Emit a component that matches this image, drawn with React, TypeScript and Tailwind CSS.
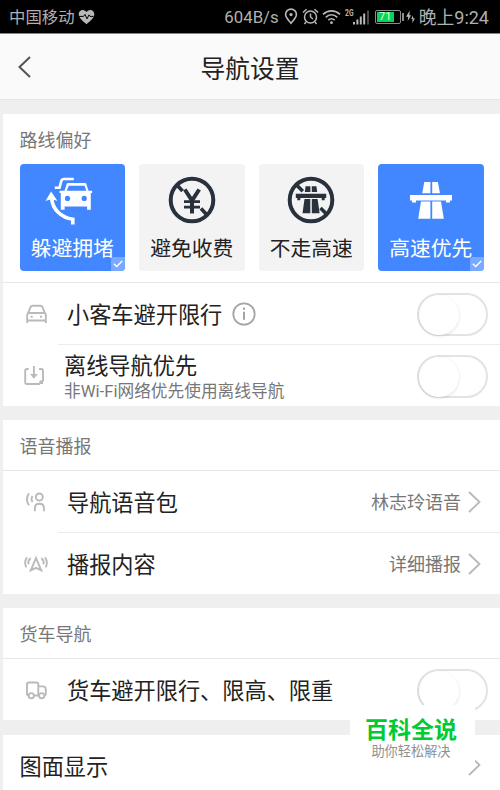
import type { ReactNode } from 'react'

function StatusBar() {
  return (
    <div className="flex h-[34px] items-center border-b border-[#858585] bg-black pr-[11px] pl-[9px] text-[#b0b0b0]">
      <span className="pt-[3px] text-[16.4px] leading-none whitespace-nowrap">中国移动</span>
      <svg className="ml-[3px]" width="17" height="16" viewBox="0 0 17 16">
        <path d="M8.5 15.2C5 12.200.7 8.900.7 5.200.7 2.600 2.500.9 4.700.9c1.600 0 2.900.8 3.800 2.200C9.400 1.700 10.700.9 12.300.9c2.200 0 4 1.700 4 4.300 0 3.700-4.300 7-7.800 10z" fill="#b8b8b8" />
        <path d="M1 7.400h4.500l1.500-2 2 4.500 2-4 1 1.500h3.500" fill="none" stroke="#000" strokeWidth="1" />
      </svg>
      <span className="ml-auto pt-[2px] font-[Roboto] text-[16.800px] leading-none">604B/s</span>
      <svg className="ml-[5px]" width="14" height="17" viewBox="0 0 14 17" fill="none" stroke="#b8b8b8" strokeWidth="1.600">
        <path d="M7 15.300C4.500 12 1.600 9.600 1.600 6.500a5.400 5.400 0 0 1 10.800 0C12.400 9.600 9.500 12 7 15.300z" />
        <circle cx="7" cy="6.600" r="1.600" fill="#b8b8b8" stroke="none" />
      </svg>
      <svg className="ml-[4px]" width="17" height="17" viewBox="0 0 17 17" fill="none" stroke="#b8b8b8" strokeWidth="1.500">
        <circle cx="8.500" cy="9" r="6" />
        <path d="M1 4.500 4.500 1.200M16 4.500 12.500 1.200M8.500 5.500V9l2.500 2M4 14l-1.500 2M13 14l1.500 2" />
      </svg>
      <svg className="ml-[3px]" width="19" height="16" viewBox="0 0 19 16" fill="none" stroke="#b8b8b8" strokeWidth="1.600">
        <path d="M1 5.300c5-4.600 12-4.600 17 0M3.700 8.300c3.500-3.200 8.100-3.200 11.600 0M6.300 11.100c2-1.700 4.400-1.700 6.400 0" />
        <circle cx="9.500" cy="13.700" r="1.400" fill="#b8b8b8" stroke="none" />
      </svg>
      <svg className="ml-[3px]" width="26" height="18" viewBox="0 0 26 18" fill="#b8b8b8">
        <text x="1" y="7.500" fontSize="8.500" fontWeight="700" fontFamily="Roboto" textLength="8.500" lengthAdjust="spacingAndGlyphs">2G</text>
        <path d="M9 14h2v2.500H9zM12.400 11.500h2v5h-2zM15.800 8.500h2v8h-2zM19.200 5.500h2v11h-2z" />
        <path d="M23 2.500h2v14h-2z" fill="#4a4a4a" />
      </svg>
      <div className="ml-[5px] flex h-[14px] w-[26px] rounded-[2px] border border-[#8c8c8c] p-px">
        <div className="flex w-[17px] items-center justify-center bg-[#0bd455] font-[Roboto] text-[11px] leading-none text-[#dfffe9]">71</div>
      </div>
      <div className="ml-px h-2 w-[2px] bg-[#8c8c8c]" />
      <svg className="ml-[2px]" width="9" height="14" viewBox="0 0 9 14" fill="#b8b8b8">
        <path d="M3.800.5 0 6.800h2.200L1.700 11l3.500-5.800H3.300zM6.800 5.500 5.200 9h1.400l-.4 4L9 8.500H7.400z" />
      </svg>
      <span className="ml-[4px] pt-[3px] text-[17.800px] leading-none whitespace-nowrap">
        晚上<span className="font-[Roboto] text-[18px]">9:24</span>
      </span>
    </div>
  )
}

function Tile({ label, active, children }: { label: string; active?: boolean; children: ReactNode }) {
  return (
    <div
      className={`relative flex h-[107px] flex-1 flex-col items-center overflow-hidden rounded-[4px] pt-[11px] ${
        active ? 'bg-[#4287ff] text-white' : 'bg-[#f3f3f3] text-[#222]'
      }`}
    >
      <svg className="overflow-visible" width="50" height="50" viewBox="0 0 50 50">
        {children}
      </svg>
      <span className="mt-[14px] text-[20.8px] leading-[21px] whitespace-nowrap">{label}</span>
      {active && (
        <span className="absolute right-0 bottom-0 flex h-[14px] w-[14px] items-center justify-center rounded-tl-[3px] bg-[#7aaaff]">
          <svg width="10" height="8" viewBox="0 0 10 8" fill="none" stroke="#fff" strokeWidth="1.300">
            <path d="M.8 3.800 3.700 6.500 9.200 1" />
          </svg>
        </span>
      )}
    </div>
  )
}

function Toggle() {
  return (
    <div className="mt-px ml-auto h-[43px] w-[71px] shrink-0 rounded-full border-2 border-[#e3e3e3] bg-white">
      <div className="h-[40px] w-[40px] rounded-full bg-white shadow-[0_1px_3px_rgba(0,0,0,0.13)]" />
    </div>
  )
}

function Chevron() {
  return (
    <svg className="ml-[7px] shrink-0" width="13" height="22" viewBox="0 0 13 22" fill="none" stroke="#b8b8b8" strokeWidth="1.800">
      <path d="M1 1l10.500 10L1 21" />
    </svg>
  )
}

function RowIcon({ children }: { children: ReactNode }) {
  return (
    <svg className="ml-[21px] shrink-0" width="24" height="24" viewBox="0 0 24 24" fill="none" stroke="#bababa" strokeWidth="1.900">
      {children}
    </svg>
  )
}

function Row({ icon, children, divider }: { icon: ReactNode; children: ReactNode; divider?: boolean }) {
  return (
    <div className="flex h-[62px] items-center">
      <RowIcon>{icon}</RowIcon>
      <div
        className={`ml-[10px] flex h-full flex-1 items-center border-b pr-[12px] pl-[9px] ${
          divider ? 'border-[#ececec]' : 'border-transparent'
        }`}
      >
        {children}
      </div>
    </div>
  )
}

function SectionTitle({ children }: { children: string }) {
  return (
    <div className="flex h-[51px] items-center border-b border-[#e8e8e8] pt-[3px] pl-[16.500px] text-[18px] leading-none text-[#777]">
      {children}
    </div>
  )
}

const title = 'pt-[4px] text-[22.2px] leading-none whitespace-nowrap text-[#222]'
const value = 'ml-auto pt-[3px] text-[18px] leading-none whitespace-nowrap text-[#777]'

export default function App() {
  return (
    <div className="relative h-[790px] w-[500px] overflow-hidden bg-[#efefef] font-['Roboto','Noto_Sans_CJK_SC',sans-serif]">
      <StatusBar />
      <header className="relative flex h-[66px] items-center justify-center border-b border-[#e5e5e5] bg-[#fafafa]">
        <svg className="absolute top-[22px] left-[18px]" width="13" height="22" viewBox="0 0 13 22" fill="none" stroke="#555" strokeWidth="2">
          <path d="M12 1 1.500 11 12 21" />
        </svg>
        <h1 className="pt-[7px] text-[24.8px] leading-none text-[#222]">导航设置</h1>
      </header>

      <main className="flex flex-col gap-[14px] pt-[14px] pl-[3px]">
        <section className="h-[292px] bg-white">
          <div className="h-[169px] border-b border-[#e8e8e8] px-[16.500px]">
            <div className="flex h-[50px] items-center pt-[3px] text-[18px] leading-none text-[#777]">路线偏好</div>
            <div className="flex gap-[14px]">
              <Tile label="躲避拥堵" active>
                <path fill="#fff" fillRule="evenodd" d="M21.500 8h16c1 0 1.700.5 2 1.400l2 6.300h3.600V18h-1.300v16.700h-3.700v-3.300H17.600v3.300h-3.800V18h-1.300v-2.300h5l2-6.300c.3-.9 1-1.400 2-1.400zm.4 2.700-2.300 5h19.700l-1.700-5zM20.500 20.800a2.600 2.600 0 1 0 0 5.200 2.600 2.600 0 0 0 0-5.200zm16.700 0a2.600 2.600 0 1 0 0 5.200 2.600 2.600 0 0 0 0-5.200z" />
                <path fill="none" stroke="#fff" strokeWidth="2.600" d="M26.800 4H17q-2 0-2.700 2l-1.800 6.700H7.800" />
                <path fill="#fff" d="M4.100 16.400l6.400 9.500c-4-1.500-8-1.500-12 0z" />
                <path fill="none" stroke="#fff" strokeWidth="3.600" d="M4.800 24C5.500 34 14 42.800 25.800 44.300v5.200" />
              </Tile>
              <Tile label="避免收费">
                <g fill="none" stroke="#29313d">
                  <circle cx="25" cy="25" r="21.300" strokeWidth="4" />
                  <path strokeWidth="3.600" d="M10 10l5.500 6M34 33.500l6 6.500" />
                  <path strokeWidth="4" d="M17.800 14.500 25 25.500l7.200-11M25 24.500v14" />
                  <path strokeWidth="2.800" d="M17 26.700h16M17 32.200h16" />
                </g>
              </Tile>
              <Tile label="不走高速">
                <g fill="none" stroke="#29313d">
                  <circle cx="25" cy="25" r="21.300" strokeWidth="4" />
                  <path strokeWidth="3.600" d="M9.500 9l7.300 7.300M34.500 33l6 6" />
                </g>
                <path fill="#29313d" d="M19.600 11.300h4.800V17h-5.600zM25.800 11.300h4.600l.8 5.700h-5.400zM9.800 18.700h30.400v4.200h-1.500v2.400h-3v-2.400H14.300v2.400h-3v-2.400H9.800zM18.500 24h5.800v14.300h-7.800zM25.800 24h5.800l2 14.300h-7.800z" />
              </Tile>
              <Tile label="高速优先" active>
                <path fill="#fff" d="M18.300 7h6.100v11.300h-8.200zM26.200 7h5.700l2.100 11.300h-7.800zM4 20h42v5.400h-2v2.200h-4v-2.200H10v2.200H6v-2.200H4zM15 26.500h9.400v17.200H12.200zM26.200 26.500H35l2.800 17.200H26.200z" />
              </Tile>
            </div>
          </div>
          <Row
            divider
            icon={
              <>
                <path d="M3.200 21V12.500l1-1.700L6.600 5q.6-1.300 2-1.300h7.800q1.400 0 2 1.300l2.400 5.800 1 1.700V21M3.200 18.500h18.600M4.200 11h16.600" />
                <path d="M6.700 14.800h2M16 14.800h2" />
              </>
            }
          >
            <span className={title}>小客车避开限行</span>
            <svg className="ml-[10px]" width="24" height="24" viewBox="0 0 24 24" fill="none" stroke="#a5a5a5" strokeWidth="1.800">
              <circle cx="12" cy="12" r="10.700" />
              <path d="M12 9.800v8M12 5.500v2.300" strokeWidth="2" />
            </svg>
            <Toggle />
          </Row>
          <Row
            icon={
              <>
                <path d="M4.700 5H3Q1.200 5 1.200 6.800v11.400Q1.200 20 3 20h12.200l3.800-3.500V6.800Q19 5 17.200 5H15M9.900 2v9" />
                <path d="M6 10h7.800L9.900 14.800z" fill="#bababa" stroke="none" />
                <path d="M15.500 20v-3.500H19V20z" fill="#bababa" stroke="none" />
              </>
            }
          >
            <div className="-ml-[3px] flex flex-col gap-[7px]">
              <span className={title}>离线导航优先</span>
              <span className="text-[16.700px] leading-none whitespace-nowrap text-[#777]">非Wi-Fi网络优先使用离线导航</span>
            </div>
            <Toggle />
          </Row>
        </section>

        <section className="h-[174px] bg-white">
          <SectionTitle>语音播报</SectionTitle>
          <Row
            divider
            icon={
              <>
                <circle cx="15.300" cy="7" r="3.500" />
                <path d="M10.900 21.300V18q0-4.300 4.500-4.300t4.500 4.300v3.300M5 3.300q-4.200 6 0 12M8.500 6q-2 3 0 6" />
              </>
            }
          >
            <span className={title}>导航语音包</span>
            <span className={value}>林志玲语音</span>
            <Chevron />
            <span className="w-[7px]" />
          </Row>
          <Row
            icon={
              <path d="M12 6 6.800 18.300l5.200-2.500 5.200 2.500zM3 5.300Q-.3 10 2.300 15.300M6.500 6Q3.500 9 4.700 12.300M21 5.300q3.300 4.700.7 10M17.500 6q3 3 1.800 6.300" />
            }
          >
            <span className={title}>播报内容</span>
            <span className={value}>详细播报</span>
            <Chevron />
            <span className="w-[7px]" />
          </Row>
        </section>

        <section className="h-[112px] bg-white">
          <SectionTitle>货车导航</SectionTitle>
          <Row
            icon={
              <>
                <path d="M4.700 17.500q-1.700 0-1.700-1.700V6.200q0-1.700 1.700-1.700h7.900q1.700 0 1.700 1.700v11.300M10 17.500h5M14.500 8.400h4.200q3.100 0 3.100 3.300v4.300q0 1.500-1.500 1.500" />
                <circle cx="7.300" cy="17.700" r="2.600" />
                <circle cx="17.700" cy="17.700" r="2.600" />
              </>
            }
          >
            <span className={title}>货车避开限行、限高、限重</span>
            <Toggle />
          </Row>
        </section>

        <section className="mt-px flex h-[60px] items-center bg-white pr-[19px] pl-[16.500px]">
          <span className={title}>图面显示</span>
          <span className="ml-auto">
            <Chevron />
          </span>
        </section>
      </main>

      <div className="absolute top-[705px] left-[350px] flex h-[60px] w-[125px] flex-col items-center bg-white pt-[14px] pr-[3px]">
        <span className="text-[23px] leading-[24px] font-bold whitespace-nowrap text-[#00cb32]">百科全说</span>
        <span className="mt-[2px] text-[13.200px] leading-[14px] whitespace-nowrap text-[#909090]">助你轻松解决</span>
      </div>
    </div>
  )
}
